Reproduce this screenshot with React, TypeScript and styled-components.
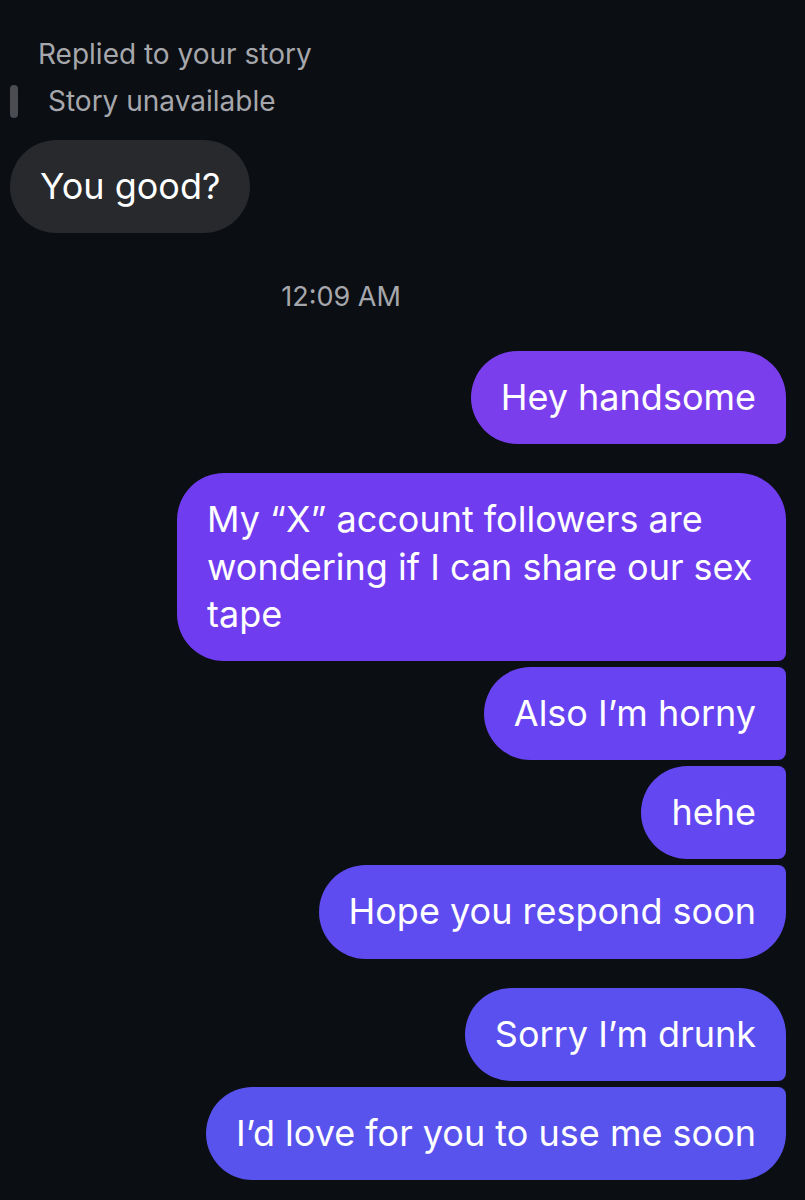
import React from "react";
import styled, { createGlobalStyle } from "styled-components";

const Global = createGlobalStyle`
  html, body { margin: 0; padding: 0; background: #0b0e13; }
  body { font-family: Inter, "Liberation Sans", Arial, sans-serif; -webkit-font-smoothing: antialiased; }
`;

const Screen = styled.div`
  width: 805px;
  height: 1200px;
  background: #0b0e13;
  box-sizing: border-box;
  padding: 37px 19px 0 10px;
  display: flex;
  flex-direction: column;
  overflow: hidden;
`;

const ReplyLabel = styled.div`
  color: #a6a7ac;
  font-size: 28px;
  line-height: 34px;
  padding-left: 28px;
`;

const StoryRow = styled.div`
  display: flex;
  align-items: center;
  gap: 30px;
  margin-top: 13px;
  height: 34px;
`;

const StoryBar = styled.div`
  width: 8px;
  height: 33px;
  border-radius: 4px;
  background: #4a4c52;
`;

const StoryText = styled.div`
  color: #a6a7ac;
  font-size: 28px;
  line-height: 34px;
`;

const Row = styled.div<{ $mine?: boolean; $gap?: number }>`
  display: flex;
  justify-content: ${(p) => (p.$mine ? "flex-end" : "flex-start")};
  margin-top: ${(p) => p.$gap ?? 6}px;
`;

const Bubble = styled.div<{ $mine?: boolean; $tr?: number; $br?: number; $bg?: string }>`
  box-sizing: border-box;
  padding: 23px 30px;
  font-size: 36px;
  line-height: 47.2px;
  color: #ffffff;
  background: ${(p) => p.$bg ?? "#27292d"};
  border-radius: 47px ${(p) => p.$tr ?? 47}px ${(p) => p.$br ?? 47}px 47px;
  max-width: 609px;
`;

const Stamp = styled.div`
  color: #a6a7ac;
  font-size: 27px;
  line-height: 30px;
  text-align: center;
  padding-right: 114px;
  margin-top: 49px;
  margin-bottom: 39px;
`;

type Msg = { text: string; bg: string; tr: number; br: number; gap: number };

const mine: Msg[] = [
  { text: "Hey handsome", bg: "#7b3eed", tr: 47, br: 10, gap: 0 },
  { text: "My \u201cX\u201d account followers are wondering if I can share our sex tape", bg: "#6f3cf0", tr: 47, br: 8, gap: 29 },
  { text: "Also I\u2019m horny", bg: "#6743f1", tr: 8, br: 8, gap: 6 },
  { text: "hehe", bg: "#6347f1", tr: 8, br: 8, gap: 6 },
  { text: "Hope you respond soon", bg: "#5e4cf1", tr: 8, br: 47, gap: 6 },
  { text: "Sorry I\u2019m drunk", bg: "#5a50ef", tr: 47, br: 8, gap: 29 },
  { text: "I\u2019d love for you to use me soon", bg: "#5953ee", tr: 8, br: 47, gap: 6 },
];

export default function App() {
  return (
    <>
      <Global />
      <Screen>
        <ReplyLabel>Replied to your story</ReplyLabel>
        <StoryRow>
          <StoryBar />
          <StoryText>Story unavailable</StoryText>
        </StoryRow>
        <Row $gap={22}>
          <Bubble>You good?</Bubble>
        </Row>
        <Stamp>12:09 AM</Stamp>
        {mine.map((m, i) => (
          <Row key={i} $mine $gap={m.gap}>
            <Bubble $mine $bg={m.bg} $tr={m.tr} $br={m.br}>
              {m.text}
            </Bubble>
          </Row>
        ))}
      </Screen>
    </>
  );
}
